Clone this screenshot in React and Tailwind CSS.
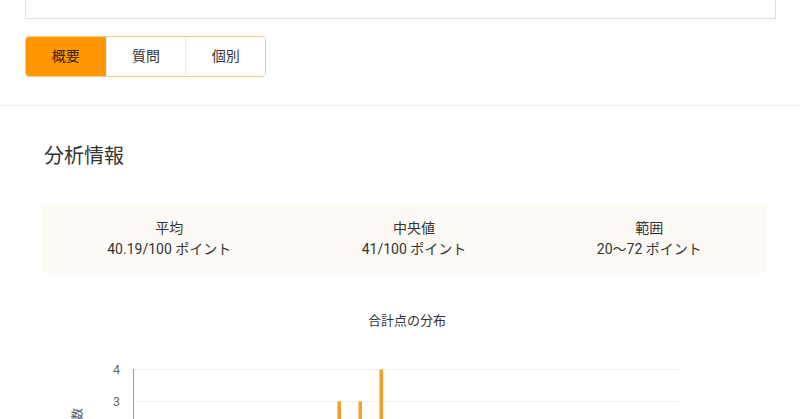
import React from 'react';

const FONT = { fontFamily: 'Roboto, "Noto Sans CJK JP", sans-serif' };

const stats = [
  { label: '平均', value: '40.19/100 ポイント' },
  { label: '中央値', value: '41/100 ポイント' },
  { label: '範囲', value: '20〜72 ポイント' },
];

// bars: [x, count]
const bars = [
  [339, 3],
  [360, 3],
  [381, 4],
];

function Chart() {
  const baseY = 369.5 + 4 * 32; // y at 0
  return (
    <svg width="800" height="120" viewBox="0 300 800 120" className="block">
      <text x="407" y="325" textAnchor="middle" fontSize="13" fill="#333" style={FONT}>
        合計点の分布
      </text>
      {[4, 3, 2, 1].map((v) => (
        <line key={v} x1="134" x2="679" y1={baseY - v * 32} y2={baseY - v * 32} stroke="#f0f0f0" strokeWidth="1" />
      ))}
      {[4, 3].map((v) => (
        <text key={v} x="120" y={baseY - v * 32 + 4.5} textAnchor="end" fontSize="12.5" fill="#666" style={FONT}>
          {v}
        </text>
      ))}
      <line x1="133.5" x2="133.5" y1="369" y2="500" stroke="#999" strokeWidth="1" />
      {bars.map(([x, c]) => (
        <rect key={x} x={x - 1.5} y={baseY - c * 32} width="3.5" height={c * 32} fill="#f5a025" />
      ))}
      <text
        x="0"
        y="0"
        fontSize="12"
        fill="#555"
        textAnchor="middle"
        transform="translate(82 420) rotate(-90)"
        style={FONT}
      >
        人数
      </text>
    </svg>
  );
}

export default function App() {
  const tabs = ['概要', '質問', '個別'];
  return (
    <div className="w-[800px] h-[419px] overflow-hidden bg-white text-[#333]" style={FONT}>
      <div className="pl-[25px] pr-[24px]">
        <div className="h-[19px] border-x border-b border-[#e0e0e0]"></div>
        <div className="mt-[17px] flex w-[241px] h-[41px] rounded-[4px] border border-[#f0cb86] overflow-hidden">
          {tabs.map((t, i) => (
            <div
              key={t}
              className={
                i === 0
                  ? 'w-[80px] flex items-center justify-center bg-[#ff9800] text-[#3a2508] text-[14px]'
                  : 'w-[80px] flex items-center justify-center bg-white text-[#333] text-[14px] border-l border-[#f1ece4]'
              }
            >
              {t}
            </div>
          ))}
        </div>
      </div>
      <div className="mt-[28px] border-t border-[#ececec]"></div>
      <div className="px-[42px]">
        <h2 className="mt-[37px] ml-[2px] text-[20px] leading-[26px] font-normal text-[#333]">分析情報</h2>
        <div className="mt-[36px] w-[725px] h-[68px] bg-[#fdfaf5] flex items-center justify-around">
          {stats.map((s) => (
            <div key={s.label} className="flex flex-col items-center text-[14px] leading-[21px] text-[#333]">
              <span>{s.label}</span>
              <span>{s.value}</span>
            </div>
          ))}
        </div>
      </div>
      <div className="mt-[27px]">
        <Chart />
      </div>
    </div>
  );
}
